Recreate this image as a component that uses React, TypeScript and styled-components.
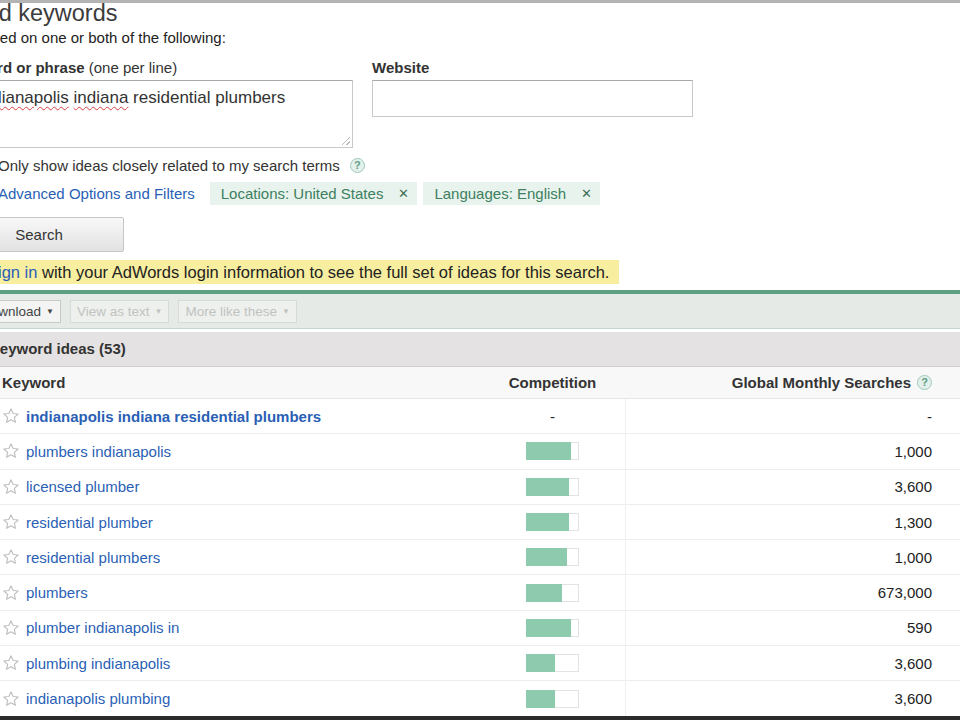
import styled, { createGlobalStyle } from 'styled-components';

const GlobalStyle = createGlobalStyle`
  body {
    margin: 0;
    background: #fff;
  }
`;

const colors = {
  text: '#222',
  muted: '#bfc3c0',
  link: '#2a5fb5',
  teal: '#3d7f60',
  tealLight: '#e8f3ed',
  rule: '#5c9f83',
  border: '#c9c9c9',
};

type Idea = {
  keyword: string;
  competition: number | null;
  searches: string;
  isQuery?: boolean;
};

const IDEAS: Idea[] = [
  { keyword: 'indianapolis indiana residential plumbers', competition: null, searches: '-', isQuery: true },
  { keyword: 'plumbers indianapolis', competition: 45, searches: '1,000' },
  { keyword: 'licensed plumber', competition: 43, searches: '3,600' },
  { keyword: 'residential plumber', competition: 43, searches: '1,300' },
  { keyword: 'residential plumbers', competition: 41, searches: '1,000' },
  { keyword: 'plumbers', competition: 36, searches: '673,000' },
  { keyword: 'plumber indianapolis in', competition: 45, searches: '590' },
  { keyword: 'plumbing indianapolis', competition: 29, searches: '3,600' },
  { keyword: 'indianapolis plumbing', competition: 29, searches: '3,600' },
];

function StarIcon() {
  return (
    <svg width="18" height="18" viewBox="0 0 24 24" fill="none">
      <polygon
        points="12,2.5 14.9,8.6 21.5,9.3 16.5,13.8 17.9,20.4 12,17 6.1,20.4 7.5,13.8 2.5,9.3 9.1,8.6"
        stroke="#bcbfbd"
        strokeWidth="1.5"
        strokeLinejoin="round"
      />
    </svg>
  );
}

function App() {
  return (
    <>
      <GlobalStyle />
      <Frame>
        <Content>
          <Title>Find keywords</Title>
          <Subtitle>Based on one or both of the following:</Subtitle>

          <Fields>
            <Field>
              <Label>
                <b>Word or phrase</b> (one per line)
              </Label>
              <TextBox>
                <Misspelled>indianapolis</Misspelled> <Misspelled>indiana</Misspelled> residential plumbers
              </TextBox>
            </Field>
            <Field>
              <Label>
                <b>Website</b>
              </Label>
              <TextInput />
            </Field>
          </Fields>

          <OptionRow>
            <Checkbox />
            <span>Only show ideas closely related to my search terms</span>
            <HelpIcon>?</HelpIcon>
          </OptionRow>

          <FilterRow>
            <Expander>▸</Expander>
            <Link>Advanced Options and Filters</Link>
            <Chips>
              <Chip>
                Locations: United States <ChipClose>✕</ChipClose>
              </Chip>
              <Chip>
                Languages: English <ChipClose>✕</ChipClose>
              </Chip>
            </Chips>
          </FilterRow>

          <SearchButton>Search</SearchButton>

          <Notice>
            <Link>Sign in</Link> with your AdWords login information to see the full set of ideas for this
            search.
          </Notice>

          <Toolbar>
            <ToolButton>
              Download <Caret>▼</Caret>
            </ToolButton>
            <ToolButton disabled>
              View as text <Caret>▼</Caret>
            </ToolButton>
            <ToolButton disabled>
              More like these <Caret>▼</Caret>
            </ToolButton>
          </Toolbar>

          <Band>Keyword ideas (53)</Band>

          <HeaderRow>
            <KeywordHead>Keyword</KeywordHead>
            <CenterCell>Competition</CenterCell>
            <SearchesHead>
              Global Monthly Searches <HelpIcon>?</HelpIcon>
            </SearchesHead>
            <span />
          </HeaderRow>

          {IDEAS.map((idea) => (
            <Row key={idea.keyword}>
              <KeywordCell>
                <StarIcon />
                <KeywordLink isQuery={!!idea.isQuery}>{idea.keyword}</KeywordLink>
              </KeywordCell>
              <CenterCell>
                {idea.competition === null ? (
                  '-'
                ) : (
                  <Bar>
                    <BarFill style={{ width: idea.competition }} />
                  </Bar>
                )}
              </CenterCell>
              <NumberCell>{idea.searches}</NumberCell>
              <span />
            </Row>
          ))}
        </Content>
      </Frame>
    </>
  );
}

const Frame = styled.div`
  width: 960px;
  height: 720px;
  box-sizing: border-box;
  overflow: hidden;
  border-top: 3px solid #b3b3b3;
  border-bottom: 4px solid #2b2b2b;
  background: #fff;
  font-family: 'Liberation Sans', Arial, sans-serif;
  color: ${colors.text};
`;

const Content = styled.div`
  margin-left: -26px;
`;

const Title = styled.h1`
  margin: 0 0 6px -8px;
  font-size: 23.5px;
  line-height: 20px;
  font-weight: normal;
  color: #3b3b3b;
`;

const Subtitle = styled.div`
  margin-bottom: 13px;
  font-size: 15px;
  line-height: 17px;
`;

const Fields = styled.div`
  display: grid;
  grid-template-columns: 379px 321px;
  column-gap: 19px;
  align-items: start;
`;

const Field = styled.div`
  display: flex;
  flex-direction: column;
  gap: 4px;
`;

const Label = styled.div`
  font-size: 15px;
  line-height: 17px;
  color: #333;
`;

const TextBox = styled.div`
  position: relative;
  height: 68px;
  box-sizing: border-box;
  padding: 6px 4px 0;
  border: 1px solid ${colors.border};
  border-top-color: #aaa;
  font-size: 17px;
  line-height: 21px;
  color: #333;

  &::after {
    content: '';
    position: absolute;
    right: 2px;
    bottom: 2px;
    width: 8px;
    height: 8px;
    background: linear-gradient(
      135deg,
      transparent 45%,
      #bbb 45%,
      #bbb 55%,
      transparent 55%,
      transparent 75%,
      #bbb 75%,
      #bbb 85%,
      transparent 85%
    );
  }
`;

const Misspelled = styled.span`
  text-decoration: underline wavy #d84040;
  text-decoration-thickness: 1px;
  text-underline-offset: 3px;
`;

const TextInput = styled.div`
  height: 37px;
  box-sizing: border-box;
  border: 1px solid ${colors.border};
  border-top-color: #aaa;
`;

const OptionRow = styled.div`
  display: flex;
  align-items: center;
  margin-top: 9px;
  height: 17px;
  font-size: 15px;
  color: #333;
`;

const Checkbox = styled.span`
  width: 13px;
  height: 13px;
  margin-right: 11px;
  border: 1px solid #999;
  box-sizing: border-box;
`;

const HelpIcon = styled.span`
  display: inline-flex;
  align-items: center;
  justify-content: center;
  width: 15px;
  height: 15px;
  margin-left: 10px;
  box-sizing: border-box;
  border-radius: 50%;
  border: 1px solid #9fcbb9;
  background: #e4f0eb;
  color: #5f9e84;
  font-size: 11px;
  font-weight: bold;
  line-height: 1;
`;

const FilterRow = styled.div`
  display: flex;
  align-items: center;
  margin-top: 8px;
  height: 23px;
  font-size: 15px;
`;

const Expander = styled.span`
  width: 24px;
  color: ${colors.link};
  font-size: 12px;
`;

const Link = styled.span`
  color: ${colors.link};
`;

const Chips = styled.div`
  display: flex;
  gap: 6px;
  margin-left: 15px;
`;

const Chip = styled.span`
  display: inline-flex;
  align-items: center;
  height: 23px;
  padding: 0 8px 0 11px;
  background: ${colors.tealLight};
  color: ${colors.teal};
  font-size: 15px;
`;

const ChipClose = styled.span`
  margin-left: 15px;
  font-size: 13px;
  color: #3f6f58;
`;

const SearchButton = styled.button`
  display: block;
  width: 170px;
  height: 35px;
  margin: 12px 0 0 -20px;
  border: 1px solid #c6c6c6;
  border-radius: 2px;
  background: linear-gradient(#f8f8f8, #e2e2e2);
  font-family: inherit;
  font-size: 15px;
  color: #333;
`;

const Notice = styled.div`
  width: fit-content;
  margin-top: 8px;
  height: 24px;
  padding: 0 10px 0 13px;
  background: #f8eea0;
  font-size: 16.5px;
  line-height: 24px;
  color: #222;
`;

const Toolbar = styled.div`
  display: flex;
  gap: 9px;
  margin-top: 6px;
  padding: 6px 0 5px;
  border-top: 4px solid ${colors.rule};
  border-bottom: 1px solid #c4d5cc;
  background: #e6eae7;
`;

const ToolButton = styled.span<{ disabled?: boolean }>`
  display: inline-flex;
  align-items: center;
  height: 23px;
  padding: 0 6px;
  box-sizing: border-box;
  border: 1px solid ${({ disabled }) => (disabled ? '#d6dbd7' : '#c8ccc9')};
  background: ${({ disabled }) => (disabled ? '#eef0ee' : '#f3f4f3')};
  color: ${({ disabled }) => (disabled ? colors.muted : '#444')};
  font-size: 13.5px;
`;

const Caret = styled.span`
  margin-left: 5px;
  font-size: 8px;
`;

const Band = styled.div`
  margin-top: 3px;
  height: 34px;
  padding-left: 15px;
  border-bottom: 1px solid #cfcfcf;
  background: #e4e2e2;
  font-size: 15px;
  font-weight: bold;
  line-height: 34px;
  color: #333;
`;

const Grid = styled.div`
  display: grid;
  grid-template-columns: 506px 145px 320px 1fr;
  align-items: stretch;
`;

const HeaderRow = styled(Grid)`
  height: 31px;
  border-bottom: 1px solid #e6e6e6;
  background: #f8f8f8;
  font-size: 15px;
  font-weight: bold;
  color: #333;
`;

const Row = styled(Grid)`
  height: 35.3px;
  box-sizing: border-box;
  border-bottom: 1px solid #ededed;
  font-size: 15px;
`;

const KeywordHead = styled.div`
  display: flex;
  align-items: center;
  padding-left: 28px;
`;

const KeywordCell = styled.div`
  display: flex;
  align-items: center;
  gap: 6px;
  padding-left: 28px;
`;

const KeywordLink = styled.span<{ isQuery: boolean }>`
  color: ${colors.link};
  font-weight: ${({ isQuery }) => (isQuery ? 'bold' : 'normal')};
`;

const CenterCell = styled.div`
  display: flex;
  align-items: center;
  justify-content: center;
`;

const SearchesHead = styled.div`
  display: flex;
  align-items: center;
  justify-content: flex-end;
  padding-right: 13px;

  ${HelpIcon} {
    margin-left: 6px;
  }
`;

const NumberCell = styled.div`
  display: flex;
  align-items: center;
  justify-content: flex-end;
  padding-right: 13px;
  border-left: 1px solid #efefef;
`;

const Bar = styled.div`
  width: 53px;
  height: 18px;
  box-sizing: border-box;
  border: 1px solid #e2e4e3;
  background: #fff;
`;

const BarFill = styled.div`
  height: 100%;
  margin: -1px 0 0 -1px;
  padding-bottom: 2px;
  background: #8ecaae;
`;

export default App;
